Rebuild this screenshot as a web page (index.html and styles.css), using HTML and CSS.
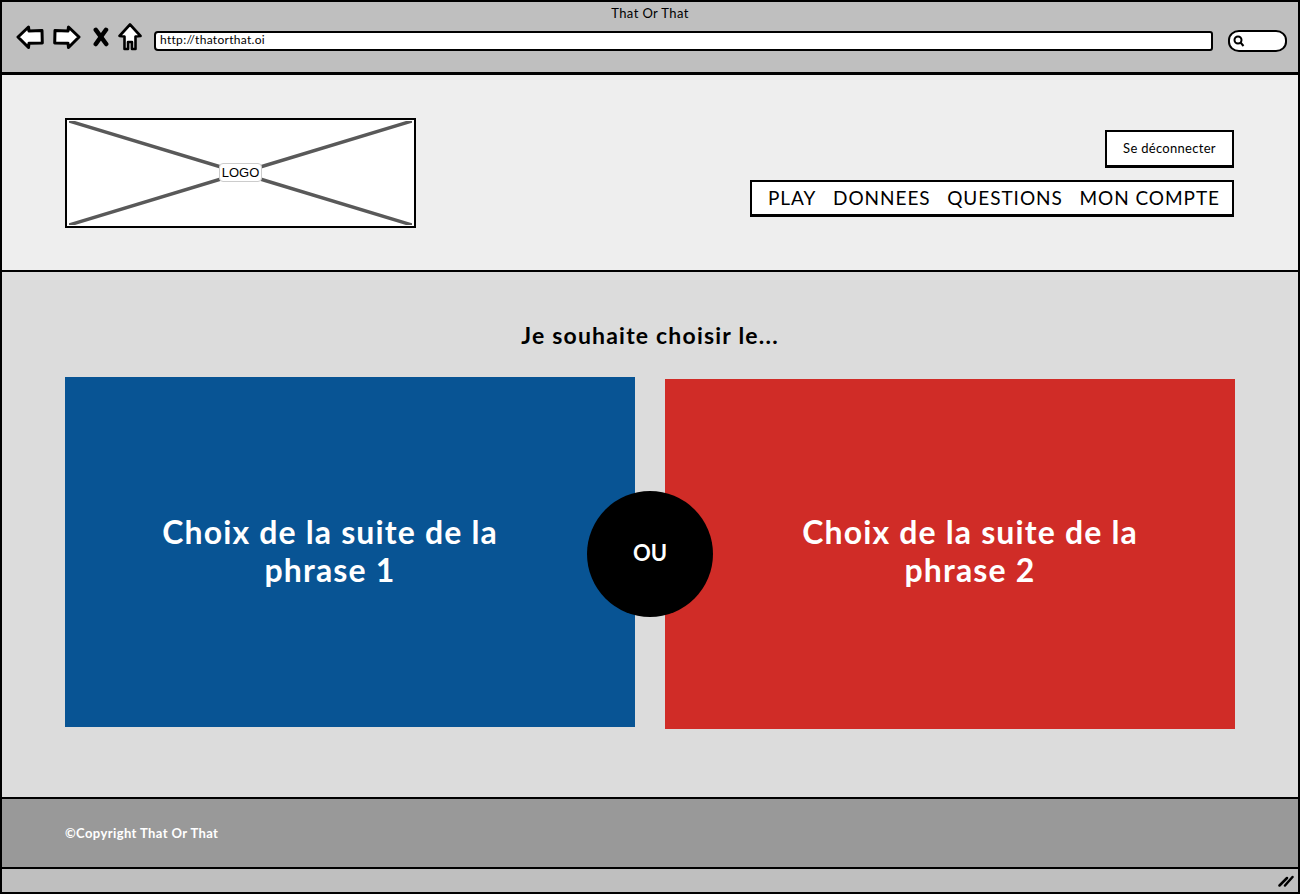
FILE: index.html
```html
<!DOCTYPE html>
<html lang="fr">

<head>
  <meta charset="UTF-8">
  <title>That Or That</title>
  <link rel="stylesheet" href="styles.css">
</head>

<body>
  <div class="window">
    <div class="browser-bar">
      <div class="browser-title">That Or That</div>
      <div class="browser-tools">
        <div class="browser-icons">
          <svg class="icon icon-arrow" viewBox="0 0 28 24" fill="#fff" stroke="#000" stroke-width="3" stroke-linejoin="round">
            <path d="M2 12 L12.500 2 L13 6 L26 5.500 L26.300 18 L13 18.300 L12.500 22.500 Z"></path>
          </svg>
          <svg class="icon icon-arrow" viewBox="0 0 28 24" fill="#fff" stroke="#000" stroke-width="3" stroke-linejoin="round">
            <path d="M26 12 L15.500 2 L15 6 L2 5.500 L1.700 18 L15 18.300 L15.500 22.500 Z"></path>
          </svg>
          <svg class="icon icon-stop" viewBox="0 0 16 20" fill="none" stroke="#000" stroke-width="4.500" stroke-linecap="round">
            <line x1="2.800" y1="2.800" x2="13.200" y2="17"></line>
            <line x1="13" y1="2.800" x2="2.800" y2="17"></line>
          </svg>
          <svg class="icon icon-home" viewBox="0 0 24 28" fill="#fff" stroke="#000" stroke-width="2.600" stroke-linejoin="round">
            <path d="M12 1.500 L22.500 13 L17.500 13.500 L17.500 26 L14 26 L14 19 L10 19 L10 26 L6.500 26 L6.500 13.500 L1.500 13 Z"></path>
          </svg>
        </div>
        <div class="url-box">http://thatorthat.oi</div>
        <div class="search-box">
          <svg class="icon-search" viewBox="0 0 12 12" fill="none" stroke="#000" stroke-width="2">
            <circle cx="5" cy="5" r="3.500"></circle>
            <line x1="7.500" y1="7.500" x2="10.500" y2="11"></line>
          </svg>
        </div>
      </div>
    </div>

    <header class="site-header">
      <div class="logo">
        <svg class="logo-cross" viewBox="0 0 100 100" preserveAspectRatio="none" fill="none" stroke="#595959" stroke-width="3.500">
          <line x1="0" y1="0" x2="100" y2="100" vector-effect="non-scaling-stroke"></line>
          <line x1="100" y1="0" x2="0" y2="100" vector-effect="non-scaling-stroke"></line>
        </svg>
        <span class="logo-label">LOGO</span>
      </div>
      <div class="header-actions">
        <a class="logout" href="#">Se déconnecter</a>
        <nav class="main-nav">
          <a href="#">PLAY</a>
          <a href="#">DONNEES</a>
          <a href="#">QUESTIONS</a>
          <a href="#">MON COMPTE</a>
        </nav>
      </div>
    </header>

    <main class="content">
      <h1 class="question">Je souhaite choisir le...</h1>
      <div class="choices">
        <a class="choice choice-blue" href="#">Choix de la suite de la phrase 1</a>
        <a class="choice choice-red" href="#">Choix de la suite de la phrase 2</a>
        <div class="or-badge">OU</div>
      </div>
    </main>

    <footer class="site-footer">©Copyright That Or That</footer>

    <div class="status-bar">
      <svg class="resize-grip" viewBox="0 0 16 12" fill="none" stroke="#000" stroke-width="2.500" stroke-linecap="round">
        <line x1="1.500" y1="10.500" x2="9" y2="3"></line>
        <line x1="7" y1="10.500" x2="14.500" y2="2"></line>
      </svg>
    </div>
  </div>
</body>

</html>
```

FILE: styles.css
```css
* {
  box-sizing: border-box;
}

body {
  margin: 0;
  background: #fff;
  color: #000;
  font-family: Lato, "Open Sans", sans-serif;
}

a {
  color: inherit;
  text-decoration: none;
}

.window {
  width: 1300px;
  height: 894px;
  border: 2px solid #000;
  display: flex;
  flex-direction: column;
}

.browser-bar {
  height: 73px;
  background: #bfbfbf;
  border-bottom: 3px solid #000;
  flex: none;
}

.browser-title {
  height: 23px;
  padding-top: 3px;
  text-align: center;
  font-size: 13px;
  line-height: 17px;
  letter-spacing: 0.4px;
}

.browser-tools {
  display: flex;
  align-items: center;
  padding: 0 11px 0 14px;
  height: 26px;
}

.browser-icons {
  display: flex;
  align-items: center;
  width: 138px;
  margin-top: -2px;
}

.icon {
  display: block;
  flex: none;
}

.icon-arrow {
  width: 28px;
  height: 24px;
  margin-right: 9px;
}

.icon-stop {
  width: 16px;
  height: 20px;
  margin-left: 3px;
  margin-right: 9px;
}

.icon-home {
  width: 24px;
  height: 28px;
}

.url-box {
  width: 1059px;
  height: 20px;
  margin-top: 6px;
  background: #fff;
  border: 2px solid #000;
  border-radius: 4px 3px 3px 4px;
  padding-left: 4px;
  font-size: 12px;
  line-height: 13px;
  letter-spacing: 0.3px;
}

.search-box {
  width: 59px;
  height: 22px;
  margin-top: 6px;
  margin-left: 15px;
  background: #fff;
  border: 2px solid #000;
  border-radius: 11px / 10px;
  padding: 3px 0 0 3px;
}

.icon-search {
  display: block;
  width: 12px;
  height: 12px;
}

.site-header {
  height: 197px;
  flex: none;
  background: #eee;
  border-bottom: 2px solid #000;
  display: flex;
  justify-content: space-between;
  align-items: flex-start;
  padding: 43px 64px 0 63px;
}

.logo {
  width: 351px;
  height: 110px;
  background: #fff;
  border: 2px solid #000;
  position: relative;
  display: flex;
  align-items: center;
  justify-content: center;
}

.logo-cross {
  position: absolute;
  inset: 1px 2px;
  width: calc(100% - 4px);
  height: calc(100% - 2px);
}

.logo-label {
  position: relative;
  margin-bottom: 2px;
  background: #fff;
  border: 1px solid #ccc;
  border-radius: 4px;
  padding: 0 2px;
  font-family: "Liberation Sans", Arial, sans-serif;
  font-size: 13px;
  line-height: 17px;
}

.header-actions {
  padding-top: 12px;
  display: flex;
  flex-direction: column;
  align-items: flex-end;
  gap: 12px;
}

.logout {
  width: 129px;
  height: 38px;
  background: #fff;
  border: 2px solid #000;
  border-bottom-width: 3px;
  text-align: center;
  font-size: 13px;
  line-height: 32px;
  letter-spacing: 0.3px;
}

.main-nav {
  width: 484px;
  height: 37px;
  background: #fff;
  border: 2px solid #000;
  border-bottom-width: 3px;
  display: flex;
  justify-content: space-between;
  align-items: center;
  padding: 0 12px 1px 16px;
  font-size: 19px;
  letter-spacing: 0.95px;
}

.content {
  height: 525px;
  flex: none;
  background: #dcdcdc;
  padding: 0 63px;
}

.question {
  margin: 48px 0 27px;
  text-align: center;
  font-size: 23px;
  line-height: 30px;
  font-weight: 700;
  letter-spacing: 1.2px;
}

.choices {
  position: relative;
  display: grid;
  grid-template-columns: 570px 570px;
  gap: 30px;
  align-items: start;
}

.choice {
  height: 350px;
  display: flex;
  align-items: center;
  justify-content: center;
  text-align: center;
  color: #fff;
  font-size: 32px;
  line-height: 38px;
  font-weight: 700;
  letter-spacing: 1.15px;
}

.choice-blue {
  background: #085494;
  padding: 0 90px 2px 50px;
}

.choice-red {
  background: #d02c27;
  margin-top: 2px;
  padding: 0 50px 6px 90px;
}

.or-badge {
  position: absolute;
  left: 522px;
  top: 114px;
  width: 126px;
  height: 126px;
  border-radius: 50%;
  background: #000;
  color: #fff;
  display: flex;
  align-items: center;
  justify-content: center;
  padding-bottom: 3px;
  font-size: 22px;
  font-weight: 700;
}

.site-footer {
  height: 72px;
  flex: none;
  background: #999;
  border-top: 2px solid #000;
  border-bottom: 2px solid #000;
  padding: 0 63px;
  display: flex;
  align-items: center;
  color: #fff;
  font-size: 13px;
  font-weight: 700;
  letter-spacing: 0.4px;
}

.status-bar {
  flex: 1;
  background: #bfbfbf;
  display: flex;
  justify-content: flex-end;
  align-items: center;
  padding-right: 4px;
}

.resize-grip {
  display: block;
  width: 16px;
  height: 12px;
}
```
